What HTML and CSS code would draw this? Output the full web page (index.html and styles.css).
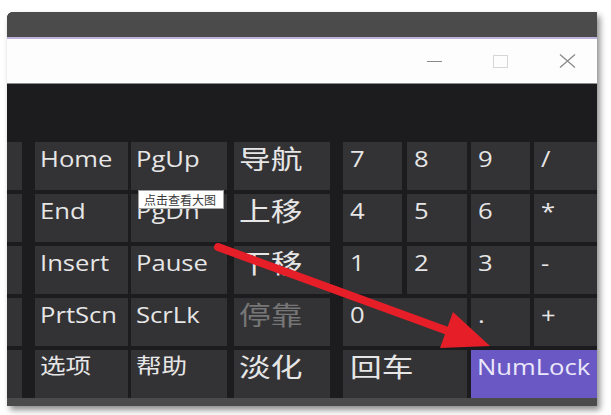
FILE: index.html
```html
<!DOCTYPE html>
<html lang="zh-CN">
<head>
<meta charset="utf-8">
<title>屏幕键盘</title>
<link rel="stylesheet" href="styles.css">
</head>
<body>
<div class="win">
  <div class="titlebar"></div>
  <div class="accent"></div>
  <div class="header">
    <svg class="ico" width="15" height="15" viewBox="0 0 15 15"><line x1="0" y1="7.5" x2="15" y2="7.5" stroke="#8a8a8a" stroke-width="1.2"/></svg>
    <svg class="ico" width="15" height="13" viewBox="0 0 15 13"><rect x="0.5" y="0.5" width="14" height="12" fill="none" stroke="#d6d6d6" stroke-width="1"/></svg>
    <svg class="ico" width="17" height="14" viewBox="0 0 17 14"><path d="M1 0.5 L16 13.5 M16 0.5 L1 13.5" stroke="#8a8a8a" stroke-width="1.3" fill="none"/></svg>
  </div>
  <div class="board">
    <div class="keys">
      <div class="key c0"></div>
      <div class="key c1"><span class="lbl">Home</span></div>
      <div class="key c2"><span class="lbl">PgUp</span></div>
      <div class="key c3 big"><span class="lbl zh">导航</span></div>
      <div class="key n n1"><span class="lbl">7</span></div>
      <div class="key n n2"><span class="lbl">8</span></div>
      <div class="key n n3"><span class="lbl">9</span></div>
      <div class="key n n4"><span class="lbl">/</span></div>

      <div class="key c0"></div>
      <div class="key c1"><span class="lbl">End</span></div>
      <div class="key c2"><span class="lbl">PgDn</span></div>
      <div class="key c3 big"><span class="lbl zh">上移</span></div>
      <div class="key n n1"><span class="lbl">4</span></div>
      <div class="key n n2"><span class="lbl">5</span></div>
      <div class="key n n3"><span class="lbl">6</span></div>
      <div class="key n n4"><span class="lbl">*</span></div>

      <div class="key c0"></div>
      <div class="key c1"><span class="lbl">Insert</span></div>
      <div class="key c2"><span class="lbl">Pause</span></div>
      <div class="key c3 big"><span class="lbl zh">下移</span></div>
      <div class="key n n1"><span class="lbl">1</span></div>
      <div class="key n n2"><span class="lbl">2</span></div>
      <div class="key n n3"><span class="lbl">3</span></div>
      <div class="key n n4"><span class="lbl">-</span></div>

      <div class="key c0"></div>
      <div class="key c1"><span class="lbl">PrtScn</span></div>
      <div class="key c2"><span class="lbl">ScrLk</span></div>
      <div class="key c3 big dim"><span class="lbl zh">停靠</span></div>
      <div class="key n n12"><span class="lbl">0</span></div>
      <div class="key n n3"><span class="lbl">.</span></div>
      <div class="key n n4"><span class="lbl">+</span></div>

      <div class="key c0"></div>
      <div class="key c1 small"><span class="lbl zh sm">选项</span></div>
      <div class="key c2 small"><span class="lbl zh sm">帮助</span></div>
      <div class="key c3 big"><span class="lbl zh">淡化</span></div>
      <div class="key n n12 big"><span class="lbl zh">回车</span></div>
      <div class="key n n34 on"><span class="lbl">NumLock</span></div>
    </div>
  </div>
  <div class="footer"></div>
</div>

<div class="tip">点击查看大图</div>

<svg class="arrow" width="611" height="415" viewBox="0 0 611 415">
  <line x1="218" y1="247" x2="456" y2="334" stroke="#e61e28" stroke-width="8" stroke-linecap="round"/>
  <polygon points="453,312 440,348 490,346" fill="#e61e28"/>
</svg>
</body>
</html>
```

FILE: styles.css
```css
html, body {
  margin: 0;
  padding: 0;
  background: #ffffff;
}

body {
  width: 611px;
  height: 415px;
  overflow: hidden;
  position: relative;
  font-family: "Open Sans", "Noto Sans", "Noto Sans CJK SC", sans-serif;
}

.win {
  margin: 12px 0 0 7px;
  width: 590px;
  border-radius: 6px 0 0 0;
  overflow: hidden;
  box-shadow: 3px 4px 6px rgba(0, 0, 0, 0.45);
  background: #1c1b1d;
}

.titlebar {
  height: 25px;
  background: #4b4b4b;
}

.accent {
  height: 2px;
  background: #bdb3dd;
}

.header {
  height: 44px;
  background: #fdfdfd;
  border-bottom: 1px solid #8c8c8c;
  display: flex;
  align-items: center;
  justify-content: flex-end;
  gap: 51px;
  padding-right: 21px;
}

.ico {
  display: block;
}

.board {
  background: #1c1b1d;
  padding-top: 58px;
}

.keys {
  display: grid;
  grid-template-columns: 15px 13px 93px 3px 96px 7px 96px 13px 59px 5px 60px 4px 59px 4px 63px;
  grid-auto-rows: 48px;
  row-gap: 4px;
}

.key {
  background: #333235;
  color: #e6e6e6;
  font-size: 21px;
  font-weight: 500;
  line-height: 28px;
  padding: 3px 0 0 5px;
  white-space: nowrap;
}

.key.big {
  padding-top: 2px;
}

.key.small {
  padding-top: 0;
}

.c0 { grid-column: 1; }
.c1 { grid-column: 3; }
.c2 { grid-column: 5; }
.c3 { grid-column: 7; }
.n1 { grid-column: 9; }
.n2 { grid-column: 11; }
.n3 { grid-column: 13; }
.n4 { grid-column: 15; }
.n12 { grid-column: 9 / 12; }
.n34 { grid-column: 13 / 16; }

.key.n {
  padding-left: 7px;
}

.key.on {
  background: #6a59c5;
  color: #ebe8fa;
  padding-left: 6px;
}

.key.dim {
  color: #767676;
}

.lbl {
  display: inline-block;
  transform: scaleX(1.22);
  transform-origin: left center;
}

.zh {
  font-family: "Noto Sans CJK SC", "Noto Sans", sans-serif;
  font-size: 26px;
  font-weight: 400;
}

.zh.sm {
  font-size: 21px;
}

.footer {
  height: 8px;
  background: #4b4b4b;
}

.tip {
  position: absolute;
  left: 138px;
  top: 190px;
  width: 76px;
  height: 17px;
  padding: 0 3px 0 5px;
  background: #ffffff;
  border: 1px solid #a0a0a0;
  font-family: "Noto Sans CJK SC", sans-serif;
  font-size: 12px;
  line-height: 17px;
  color: #3a3a3a;
  white-space: nowrap;
}

.arrow {
  position: absolute;
  left: 0;
  top: 0;
  pointer-events: none;
}
```
